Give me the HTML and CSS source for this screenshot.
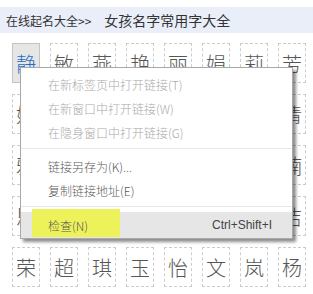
FILE: index.html
```html
<!DOCTYPE html>
<html lang="zh-CN">
<head>
    <meta charset="UTF-8">
    <meta name="viewport" content="width=device-width, initial-scale=1.0">
    <title>女孩名字常用字大全</title>
    <link rel="stylesheet" href="styles.css">
</head>
<body>
    <div class="crumbs">
        <a class="crumb-link" href="#">在线起名大全&gt;&gt;</a>
        <span class="crumb-title">女孩名字常用字大全</span>
    </div>
    <div class="chars">
        <a class="char active" href="#">静</a>
        <a class="char" href="#">敏</a>
        <a class="char" href="#">燕</a>
        <a class="char" href="#">艳</a>
        <a class="char" href="#">丽</a>
        <a class="char" href="#">娟</a>
        <a class="char" href="#">莉</a>
        <a class="char" href="#">芳</a>
        <a class="char" href="#">婷</a>
        <a class="char" href="#">雪</a>
        <a class="char" href="#">慧</a>
        <a class="char" href="#">颖</a>
        <a class="char" href="#">琳</a>
        <a class="char" href="#">晶</a>
        <a class="char" href="#">妍</a>
        <a class="char" href="#">倩</a>
        <a class="char" href="#">雅</a>
        <a class="char" href="#">梦</a>
        <a class="char" href="#">璐</a>
        <a class="char" href="#">月</a>
        <a class="char" href="#">瑶</a>
        <a class="char" href="#">嘉</a>
        <a class="char" href="#">萱</a>
        <a class="char" href="#">楠</a>
        <a class="char" href="#">思</a>
        <a class="char" href="#">涵</a>
        <a class="char" href="#">欣</a>
        <a class="char" href="#">佳</a>
        <a class="char" href="#">雨</a>
        <a class="char" href="#">菲</a>
        <a class="char" href="#">蕾</a>
        <a class="char" href="#">洁</a>
        <a class="char" href="#">荣</a>
        <a class="char" href="#">超</a>
        <a class="char" href="#">琪</a>
        <a class="char" href="#">玉</a>
        <a class="char" href="#">怡</a>
        <a class="char" href="#">文</a>
        <a class="char" href="#">岚</a>
        <a class="char" href="#">杨</a>
    </div>

    <!-- right-click menu over the list -->
    <ul class="context-menu">
        <li class="item disabled">在新标签页中打开链接(T)</li>
        <li class="item disabled">在新窗口中打开链接(W)</li>
        <li class="item disabled">在隐身窗口中打开链接(G)</li>
        <li class="sep"></li>
        <li class="item">链接另存为(K)...</li>
        <li class="item">复制链接地址(E)</li>
        <li class="sep"></li>
        <li class="item hover"><span class="mark">检查(N)</span><span class="key">Ctrl+Shift+I</span></li>
    </ul>
</body>
</html>
```

FILE: styles.css
```css
body {
    margin: 0;
    font-family: "Noto Sans CJK SC", "Liberation Sans", sans-serif;
    background: #fff;
    color: #333;
}
.crumbs {
    margin-top: 7px;
    height: 26px;
    padding-left: 6px;
    background: #e9eef9;
    display: flex;
    align-items: center;
}
.crumb-link {
    font-size: 12px;
    color: #333;
    text-decoration: none;
    margin-right: 13px;
}
.crumb-title {
    font-size: 14px;
    color: #333;
}
.chars {
    margin-top: 10px;
    padding-left: 12px;
    display: grid;
    grid-template-columns: repeat(8, 28px);
    grid-auto-rows: 40px;
    column-gap: 10px;
    row-gap: 11px;
}
.char {
    box-sizing: border-box;
    border: 1px dashed #ccc;
    display: flex;
    align-items: center;
    justify-content: center;
    font-size: 20px;
    font-weight: 300;
    color: #555;
    text-decoration: none;
}
.char.active {
    background: #e6e6e6;
    border: 1px solid #c4c4c4;
    color: #1f6fc6;
}
.context-menu {
    position: absolute;
    left: 20px;
    top: 67px;
    width: 273px;
    box-sizing: border-box;
    margin: 0;
    padding: 4px 0 0;
    list-style: none;
    background: #fff;
    border: 1px solid #a9a9a9;
    box-shadow: 3px 3px 3px rgba(0, 0, 0, 0.45);
    font-size: 12px;
    font-weight: 300;
}
.item {
    height: 24px;
    display: flex;
    align-items: center;
    justify-content: space-between;
    padding: 0 20px 0 27px;
    color: #5a5a5a;
}
.item.disabled {
    color: #aaa;
}
.sep {
    height: 1px;
    margin: 4px 0 5px;
    background: #e8e8e8;
}
.item.hover {
    height: 26px;
    background: #e6e6e6;
    position: relative;
    z-index: 0;
}
.mark {
    position: relative;
}
.mark::before {
    content: "";
    position: absolute;
    left: -16px;
    top: -8px;
    width: 88px;
    height: 28px;
    background: #eef25a;
    z-index: -1;
}
.key {
    color: #444;
    font-family: "Liberation Sans", sans-serif;
    font-size: 12px;
}
```
